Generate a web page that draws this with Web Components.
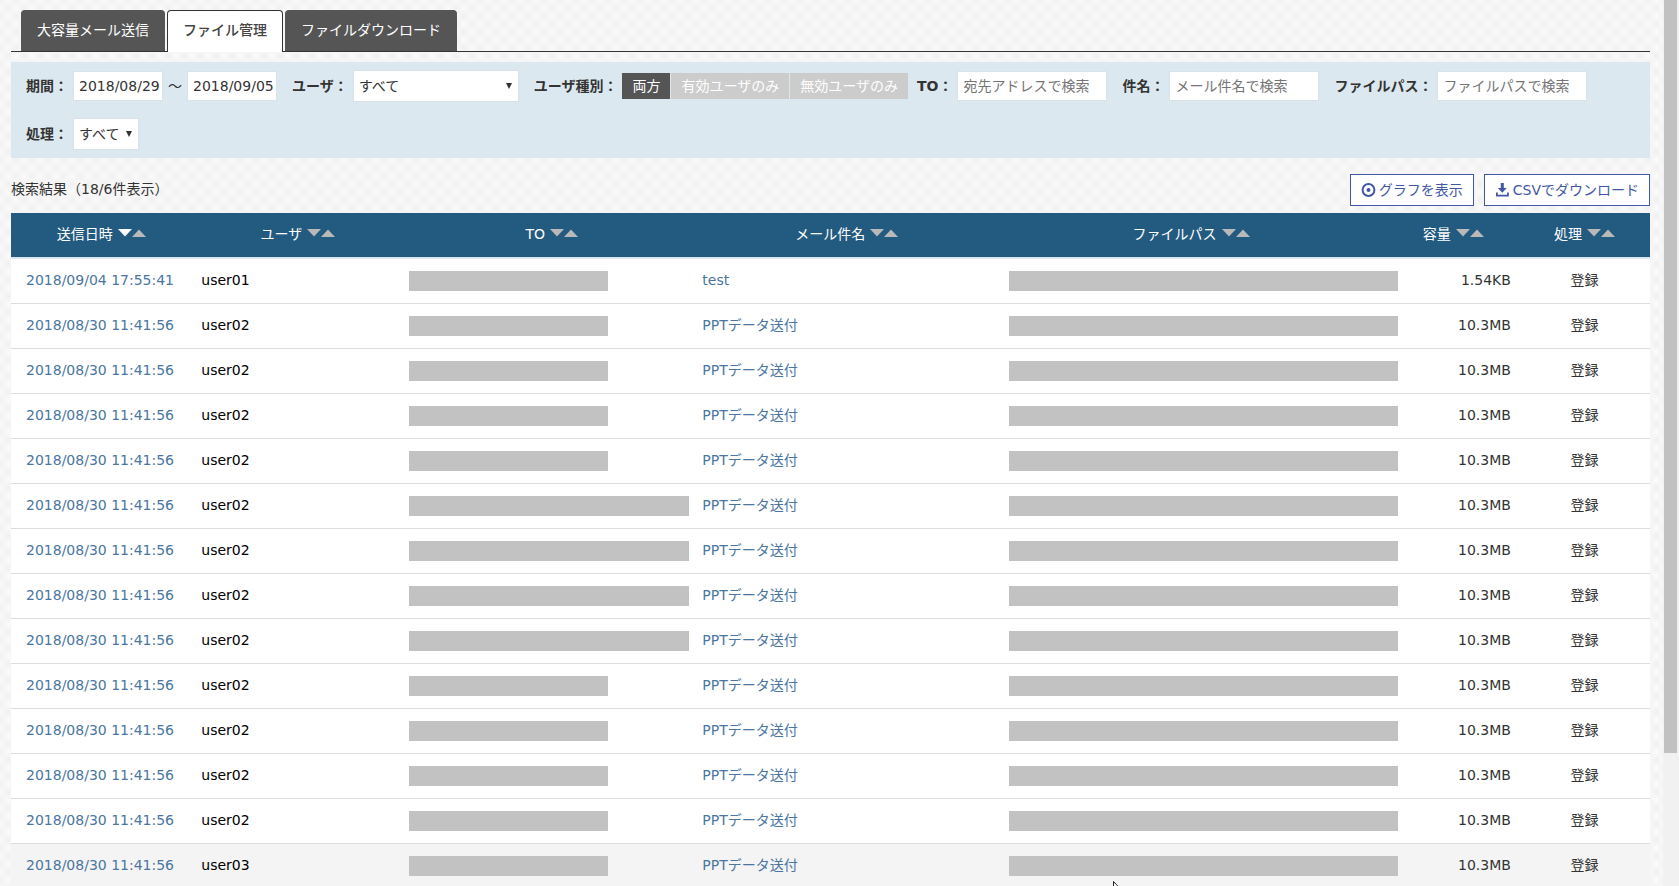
<!DOCTYPE html>
<html lang="ja">
<head>
<meta charset="utf-8">
<title>ファイル管理</title>
<style>
  html, body { margin: 0; height: 100%; }
  body {
    overflow: hidden;
    color: #333;
    font: 14px/20px "DejaVu Sans", "Noto Sans CJK JP", sans-serif;
    background:
      radial-gradient(circle, #f1f1f1 10%, transparent 65%) 0 0 / 16px 16px,
      radial-gradient(circle, #f1f1f1 10%, transparent 65%) 8px 8px / 16px 16px,
      #fafafa;
  }
</style>
</head>
<body>
<file-manager></file-manager>
<script>
const define = (name, html, setup) => {
  const template = document.createElement('template');
  template.innerHTML = html;
  customElements.define(name, class extends HTMLElement {
    connectedCallback() {
      if (this.shadowRoot) return;
      const root = this.attachShadow({ mode: 'open' });
      root.append(template.content.cloneNode(true));
      if (setup) setup(this, root);
    }
  });
};

define('tab-bar', `
<style>
  :host { display: block; border-bottom: 1px solid #333; }
  nav { display: flex; gap: 2px; padding: 0 10px; }
  a {
    box-sizing: border-box; height: 41px; padding: 9px 15px;
    border: 1px solid #555; border-bottom: 0; border-radius: 4px 4px 0 0;
    background: #555; color: #fff; text-decoration: none; white-space: nowrap;
  }
  a[aria-current] { height: 42px; margin-bottom: -1px; background: #fff; color: #444; border-color: #333; font-weight: 500; }
</style>
<nav>
  <a href="#send">大容量メール送信</a>
  <a href="#files" aria-current="page">ファイル管理</a>
  <a href="#download">ファイルダウンロード</a>
</nav>`);

const CONTROL = `
  label { font-weight: bold; white-space: nowrap; }
  input, select {
    box-sizing: border-box; height: 30px; margin: 0; padding: 0 5px; min-width: 0;
    border: 1px solid #d9e2e8; border-radius: 0; background: #fff; color: #333; font: inherit;
  }
  input::placeholder { color: #757575; opacity: 1; }
`;

define('search-field', `
<style>
  :host { display: flex; align-items: center; gap: 5px; }
  ${CONTROL}
  input { width: 150px; }
</style>
<label for="field"></label><input id="field" type="text">`, (host, root) => {
  root.querySelector('label').textContent = host.getAttribute('label');
  root.querySelector('input').placeholder = host.getAttribute('hint');
});

define('date-range', `
<style>
  :host { display: flex; align-items: center; gap: 5px; }
  ${CONTROL}
  input { width: 90px; padding-right: 0; }
</style>
<label for="from">期間：</label><input id="from" value="2018/08/29">
<span>～</span><input id="to" aria-label="終了日" value="2018/09/05">`);

define('select-field', `
<style>
  :host { display: flex; align-items: center; gap: 5px; }
  ${CONTROL}
  .box { display: grid; align-items: center; }
  .box > * { grid-area: 1 / 1; }
  select { appearance: none; height: 32px; width: 66px; }
  :host([wide]) select { width: 166px; }
  svg { justify-self: end; width: 6px; height: 6px; margin-right: 7px; pointer-events: none; }
</style>
<label for="field"></label>
<span class="box">
  <select id="field"><option>すべて</option></select>
  <svg viewBox="0 0 6 6"><path d="M0 0h6L3 6z" fill="#333"/></svg>
</span>`, (host, root) => {
  root.querySelector('label').textContent = host.getAttribute('label');
});

define('user-kind', `
<style>
  :host { display: flex; align-items: center; gap: 5px; }
  b { white-space: nowrap; }
  div { display: flex; gap: 1px; }
  button { height: 26px; padding: 0 10px; border: 0; background: #ccc; color: #fff; font: inherit; white-space: nowrap; }
  button[aria-pressed="true"] { background: #555; }
</style>
<b id="kind">ユーザ種別：</b>
<div role="group" aria-labelledby="kind">
  <button type="button" aria-pressed="true">両方</button>
  <button type="button" aria-pressed="false">有効ユーザのみ</button>
  <button type="button" aria-pressed="false">無効ユーザのみ</button>
</div>`);

define('search-panel', `
<style>
  :host { display: block; margin-top: 10px; padding: 8px 15px; background: #dce8ef; }
  form { display: flex; flex-wrap: wrap; align-items: center; gap: 16px 15px; }
  user-kind { margin-right: -6px; }
</style>
<form>
  <date-range></date-range>
  <select-field wide label="ユーザ："></select-field>
  <user-kind></user-kind>
  <search-field label="TO：" hint="宛先アドレスで検索"></search-field>
  <search-field label="件名：" hint="メール件名で検索"></search-field>
  <search-field label="ファイルパス：" hint="ファイルパスで検索"></search-field>
  <select-field label="処理："></select-field>
</form>`);

define('outline-button', `
<style>
  :host { display: block; }
  button {
    display: flex; align-items: center; gap: 3px; height: 32px; padding: 0 10px;
    border: 1px solid #4257a5; background: #fff; color: #4257a5; font: inherit; white-space: nowrap;
  }
</style>
<button type="button"><slot name="icon"></slot><slot></slot></button>`);

define('result-bar', `
<style>
  :host { display: flex; align-items: center; gap: 10px; padding: 16px 0 7px; }
  p { flex: 1; margin: 0; padding-bottom: 2px; }
  svg { display: block; width: 15px; height: 14px; }
</style>
<p>検索結果（18/6件表示）</p>
<outline-button>
  <svg slot="icon" viewBox="0 0 15 14"><circle cx="7.5" cy="7" r="5.9" fill="none" stroke="#4257a5" stroke-width="2"/><circle cx="7.5" cy="7" r="2" fill="#4257a5"/></svg>
  グラフを表示
</outline-button>
<outline-button>
  <svg slot="icon" viewBox="0 0 15 14"><path d="M5.800 0h3v5h3L7.300 9.800 2.800 5h3zM1 9.500h1.800v2.200h9.200V9.500h1.800V13.500H1z" fill="#4257a5"/></svg>
  CSVでダウンロード
</outline-button>`);

define('sort-arrows', `
<style>
  :host { display: inline-block; }
  svg { display: block; width: 28px; height: 9px; }
  path { fill: #b9b9b9; }
  :host([active]) .down { fill: #fff; }
</style>
<svg viewBox="0 0 28 9"><path class="down" d="M0 0h14L7 7.500z"/><path d="M14 8h14L21 .5z"/></svg>`);

define('redacted-bar', `
<style>
  :host { display: block; height: 20px; background: #c2c2c2; }
</style>`);

define('result-table', `
<style>
  :host { display: block; }
  table { width: 100%; border-collapse: collapse; table-layout: fixed; }
  th { height: 42px; padding: 0 0 2px; background: #235a7f; color: #fff; font-weight: normal; border-bottom: 2px solid #dce8ef; }
  th sort-arrows { margin-left: 5px; vertical-align: 1px; }
  tbody tr { background: #fff; }
  tbody tr.hover { background: #f4f4f4; }
  td { height: 42px; padding: 0 0 2px; border-bottom: 1px solid #ddd; white-space: nowrap; }
  a { color: #4a76a0; text-decoration: none; }
  td:nth-child(1) { padding-left: 15px; }
  td:nth-child(2) { padding-left: 10px; color: #000; }
  td:nth-child(3) { padding: 1px 0 1px 5px; }
  td:nth-child(4) { padding-left: 3px; }
  td:nth-child(5) { padding: 1px 0 1px 15px; }
  td:nth-child(6) { text-align: right; padding-right: 8px; }
  td:nth-child(7) { text-align: center; }
  .short { width: 199px; }
  .long { width: 280px; }
  .path { margin-right: -10px; }
</style>
<table>
  <colgroup>
    <col style="width:11%"><col style="width:13%"><col style="width:18%"><col style="width:18%"><col style="width:24%"><col style="width:8%"><col style="width:8%">
  </colgroup>
  <thead><tr></tr></thead>
  <tbody></tbody>
</table>`, (host, root) => {
  root.querySelector('thead tr').innerHTML =
    ['送信日時', 'ユーザ', 'TO', 'メール件名', 'ファイルパス', '容量', '処理']
      .map((t, i) => `<th scope="col">${t}<sort-arrows${i ? '' : ' active'}></sort-arrows></th>`).join('');
  const later = '2018/08/30 11:41:56', ppt = 'PPTデータ送付';
  const rows = [['2018/09/04 17:55:41', 'user01', 'short', 'test', '1.54KB']];
  for (let i = 2; i <= 13; i++) rows.push([later, 'user02', i > 5 && i < 10 ? 'long' : 'short', ppt, '10.3MB']);
  rows.push([later, 'user03', 'short', ppt, '10.3MB']);
  root.querySelector('tbody').innerHTML = rows.map(([date, user, bar, subject, size]) => `
    <tr${user === 'user03' ? ' class="hover"' : ''}>
      <td><a href="#mail">${date}</a></td><td>${user}</td>
      <td><redacted-bar class="${bar}"></redacted-bar></td>
      <td><a href="#mail">${subject}</a></td>
      <td><redacted-bar class="path"></redacted-bar></td><td>${size}</td><td>登録</td>
    </tr>`).join('');
});

define('scroll-rail', `
<style>
  :host { display: block; box-sizing: border-box; width: 16px; padding: 0 2px 0 1px; background: #f1f1f1; }
  div { height: 85%; background: #c1c1c1; }
</style>
<div></div>`);

define('mouse-pointer', `
<style>
  :host { position: absolute; left: 66.300%; top: 881px; }
  svg { display: block; width: 12px; height: 18px; }
</style>
<svg viewBox="0 0 12 18"><path d="M.5.5v14l3.300-3 2.200 5 2-1-2.200-4.500h4.700z" fill="#fff" stroke="#222"/></svg>`);

define('file-manager', `
<style>
  :host { display: flex; height: 100vh; overflow: hidden; position: relative; }
  main { flex: 1; min-width: 0; padding: 10px 13px 0 11px; }
</style>
<main>
  <tab-bar></tab-bar>
  <search-panel></search-panel>
  <result-bar></result-bar>
  <result-table></result-table>
</main>
<scroll-rail></scroll-rail>
<mouse-pointer></mouse-pointer>`);
</script>
</body>
</html>
